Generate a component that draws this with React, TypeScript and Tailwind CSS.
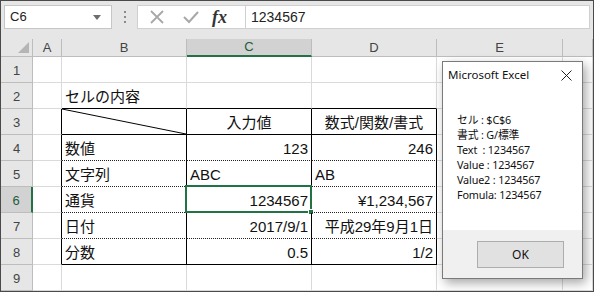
import type { ReactNode } from "react";

const cols = ["A", "B", "C", "D", "E", ""];
const colW = ["w-[29px]", "w-[125px]", "w-[125px]", "w-[125px]", "w-[126px]", "flex-1"];

type CellDef = { text?: ReactNode; align?: "l" | "r" | "c"; cls?: string; extra?: ReactNode };

// table borders live on right/bottom edges of cells
const solidB = "border-b-black";
const dotB = "border-b-[#222] [border-bottom-style:dotted]";

function rowCells(r: number): CellDef[] {
  const blank: CellDef = {};
  const inTable = r >= 3 && r <= 8;
  const a: CellDef = { cls: inTable ? "border-r-black" : "" };
  const bottom = r === 2 || r === 3 || r === 8 ? solidB : r >= 4 && r <= 7 ? dotB : "";
  const vr = inTable ? "border-r-black" : "";
  const data: Record<number, [ReactNode, ReactNode, "l" | "r" | "c", ReactNode, "l" | "r" | "c"]> = {
    3: ["", "入力値", "c", "数式/関数/書式", "c"],
    4: ["数値", "123", "r", "246", "r"],
    5: ["文字列", "ABC", "l", "AB", "l"],
    6: ["通貨", "1234567", "r", "¥1,234,567", "r"],
    7: ["日付", "2017/9/1", "r", "平成29年9月1日", "r"],
    8: ["分数", "0.5", "r", "1/2", "r"],
  };
  if (r === 2) {
    return [blank, { text: "セルの内容", align: "l", cls: solidB }, { cls: solidB }, { cls: solidB }, blank, blank];
  }
  if (!inTable) return [blank, blank, blank, blank, blank, blank];
  const d = data[r];
  return [
    a,
    {
      text: d[0],
      align: "l",
      cls: `${vr} ${bottom}`,
      extra:
        r === 3 ? (
          <svg className="absolute inset-0 h-full w-full" viewBox="0 0 100 100" preserveAspectRatio="none">
            <line x1="0" y1="0" x2="100" y2="100" stroke="#000" strokeWidth="1" vectorEffect="non-scaling-stroke" />
          </svg>
        ) : null,
    },
    {
      text: d[1],
      align: d[2],
      cls: `${vr} ${bottom}`,
      extra:
        r === 6 ? (
          <div className="absolute -left-[2px] -top-[2px] -right-[1px] -bottom-[1px] border-2 border-[#217346]">
            <div className="absolute -bottom-[4px] -right-[4px] h-[6px] w-[6px] border border-white bg-[#217346]" />
          </div>
        ) : null,
    },
    { text: d[3], align: d[4], cls: `${vr} ${bottom}` },
    blank,
    blank,
  ];
}

function Cell({ def, w }: { def: CellDef; w: string }) {
  const al = def.align === "r" ? "justify-end pr-[3px]" : def.align === "c" ? "justify-center" : "justify-start pl-[3px]";
  return (
    <div
      className={`relative flex h-full shrink-0 items-end pb-[1px] border-r border-b border-[#dadada] ${al} ${w} ${def.cls ?? ""}`}
    >
      {def.extra}
      {def.text ? <span className="relative whitespace-nowrap leading-[20px]">{def.text}</span> : null}
    </div>
  );
}

function FormulaBar() {
  return (
    <div className="flex h-[38px] items-start pt-[4px] pl-[3px] pr-[3px]">
      <div className="flex h-[24px] w-[108px] items-center justify-between border border-[#c6c6c6] bg-white pl-[5px] pr-[10px]">
        <span className="text-[13px] text-[#222]">C6</span>
        <svg width="8" height="5" viewBox="0 0 8 5">
          <path d="M0 0 L8 0 L4 5 Z" fill="#6d6d6d" />
        </svg>
      </div>
      <div className="flex w-[25px] h-[24px] flex-col items-center justify-center gap-[3px]">
        <div className="h-[2px] w-[2px] bg-[#8a8a8a]" />
        <div className="h-[2px] w-[2px] bg-[#8a8a8a]" />
        <div className="h-[2px] w-[2px] bg-[#8a8a8a]" />
      </div>
      <div className="flex h-[24px] w-[109px] items-center border border-[#d0d0d0] bg-white">
        <svg className="ml-[12px]" width="14" height="14" viewBox="0 0 14 14">
          <path d="M1 1 L13 13 M13 1 L1 13" stroke="#a8a8a8" strokeWidth="1.8" />
        </svg>
        <svg className="ml-[19px]" width="16" height="14" viewBox="0 0 16 14">
          <path d="M1 7 L6 12 L15 2" stroke="#a8a8a8" strokeWidth="2" fill="none" />
        </svg>
        <span className="ml-[13px] font-['Liberation_Serif',serif] text-[18px] font-bold italic leading-none text-[#333]">
          fx
        </span>
      </div>
      <div className="flex h-[24px] flex-1 items-center border border-[#d0d0d0] border-l-0 bg-white pl-[5px]">
        <span className="text-[14px] text-[#222]">1234567</span>
      </div>
    </div>
  );
}

function Dialog() {
  const lines = ["セル : $C$6", "書式 : G/標準", "Text  : 1234567", "Value : 1234567", "Value2 : 1234567", "Fomula: 1234567"];
  return (
    <div className="absolute left-[441px] top-[60px] flex h-[218px] w-[141px] flex-col border border-[#7a7a7a] bg-white font-['Noto_Sans','Noto_Sans_CJK_JP',sans-serif] text-[#111] shadow-[3px_4px_10px_rgba(0,0,0,0.35)]">
      <div className="flex h-[26px] items-center justify-between pl-[5px] pr-[10px]">
        <span className="text-[11.5px]">Microsoft Excel</span>
        <svg width="11" height="11" viewBox="0 0 11 11">
          <path d="M0.5 0.5 L10.5 10.5 M10.5 0.5 L0.5 10.5" stroke="#222" strokeWidth="1" />
        </svg>
      </div>
      <div className="flex-1 pl-[14px] pt-[24px] text-[10.8px] leading-[15px] tracking-[-0.15px]">
        {lines.map((l) => (
          <div key={l} className="whitespace-pre">
            {l}
          </div>
        ))}
      </div>
      <div className="flex h-[48px] justify-end bg-[#f0f0f0] pr-[18px] pt-[11px]">
        <div className="flex h-[27px] w-[87px] items-center justify-center border border-[#adadad] bg-[#e1e1e1] text-[12px]">
          OK
        </div>
      </div>
    </div>
  );
}

export default function App() {
  const rows = [1, 2, 3, 4, 5, 6, 7, 8, 9];
  return (
    <div className="relative h-[292px] w-[594px] overflow-hidden border border-[#4a4a4a] bg-[#e6e6e6] font-['Liberation_Sans','Noto_Sans_CJK_JP',sans-serif] text-[#111]">
      <FormulaBar />
      <div className="flex h-[18px]">
        <div className="relative w-[32px] shrink-0 border-r border-b border-[#bdbdbd]">
          <svg className="absolute bottom-[3px] right-[3px]" width="11" height="11" viewBox="0 0 11 11">
            <path d="M11 0 L11 11 L0 11 Z" fill="#b5b5b5" />
          </svg>
        </div>
        {cols.map((c, i) => (
          <div
            key={i}
            className={`flex shrink-0 items-center justify-center text-[13px] ${colW[i]} ${
              c === "C"
                ? "border-r border-r-[#bdbdbd] border-b-2 border-b-[#217346] bg-[#d2d2d2] text-[#1f5c3a]"
                : "border-r border-b border-[#bdbdbd] text-[#444]"
            }`}
          >
            {c}
          </div>
        ))}
      </div>
      <div className="bg-white">
        {rows.map((r) => (
          <div key={r} className="flex h-[26px] text-[15px]">
            <div
              className={`flex w-[32px] shrink-0 items-end justify-center pb-[2px] text-[13px] ${
                r === 6
                  ? "border-b border-b-[#bdbdbd] border-r-2 border-r-[#217346] bg-[#d2d2d2] text-[#1f5c3a]"
                  : "border-r border-b border-[#bdbdbd] bg-[#e6e6e6] text-[#444]"
              }`}
            >
              {r}
            </div>
            {rowCells(r).map((d, i) => (
              <Cell key={i} def={d} w={colW[i]} />
            ))}
          </div>
        ))}
      </div>
      <Dialog />
    </div>
  );
}
